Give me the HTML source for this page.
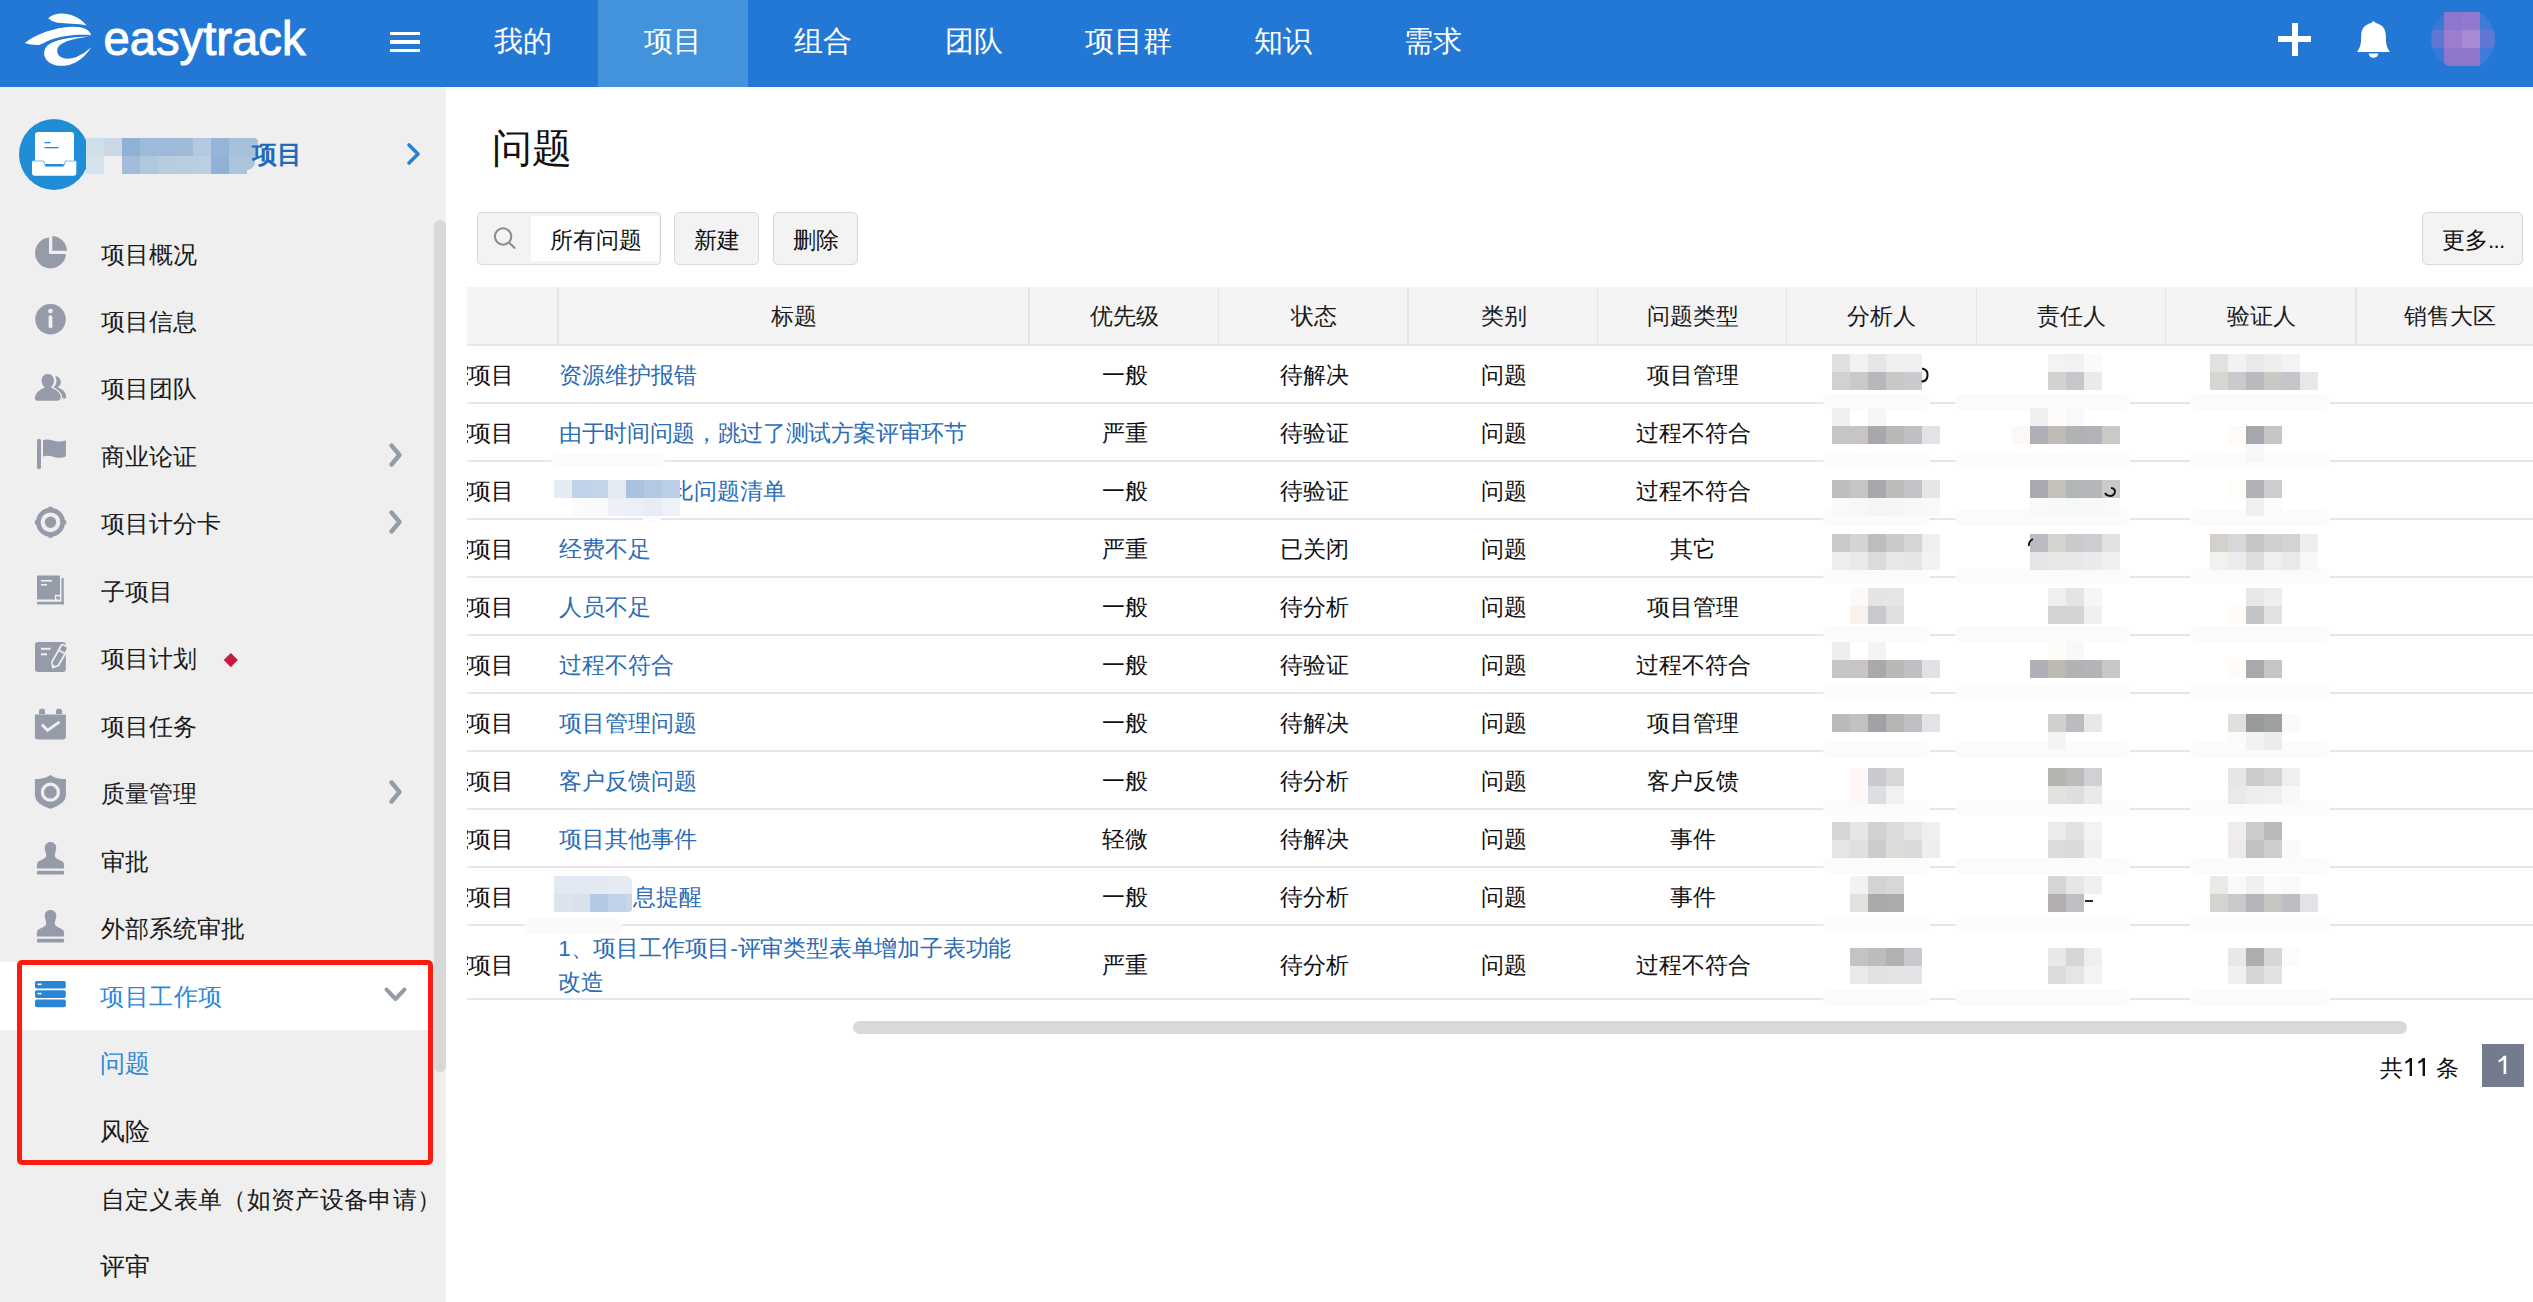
<!DOCTYPE html><html><head><meta charset="utf-8"><style>
html,body{margin:0;padding:0;}
body{width:2533px;height:1302px;overflow:hidden;position:relative;background:#fff;font-family:'Liberation Sans', sans-serif;}
.t{position:absolute;white-space:nowrap;}
.r{position:absolute;}
svg{position:absolute;}

</style></head><body>
<div class="r" style="left:0.0px;top:0.0px;width:2533.0px;height:87.0px;background:#2478d5;"></div>
<div class="r" style="left:598.0px;top:0.0px;width:150.0px;height:87.0px;background:#4393dc;"></div>
<svg style="left:0px;top:0px" width="100" height="87" viewBox="0 0 100 87">
<path fill="#fff" d="M48.2 18.2 C55 12 73 10 86.6 25.4 C78 23.5 66 23.8 58 22.8 C53 22 50.5 20 48.2 18.2 Z"/>
<path fill="#fff" d="M24.7 43 C36 34 54 27.5 72 26.7 C82 26.3 89.5 29 91.2 35.2 C80 34 62 35.5 50 40 C44 42.5 41 45 37.8 45 C33 45 28 44 24.7 43 Z"/>
<path fill="#fff" d="M90 36.5 C70 36.5 54 40 47.5 45.5 C42 50.5 43 60 52 64 C60 67.5 72 66 80 59.5 C86 55 89.5 50 91.2 46.9 C86 52 78 57.5 70 58.6 C62 59.5 56.5 55.5 57.3 50 C58 44 66 39.5 90 36.5 Z"/>
</svg>
<svg style="left:100px;top:12px" width="215" height="60"><text x="3.5" y="42.8" font-family="Liberation Sans, sans-serif" font-weight="normal" font-size="48" fill="#fff" stroke="#fff" stroke-width="1.0" textLength="202" lengthAdjust="spacingAndGlyphs">easytrack</text></svg>
<div class="r" style="left:390.0px;top:32.0px;width:30.0px;height:3.4px;background:#fff;"></div>
<div class="r" style="left:390.0px;top:40.3px;width:30.0px;height:3.4px;background:#fff;"></div>
<div class="r" style="left:390.0px;top:48.5px;width:30.0px;height:3.4px;background:#fff;"></div>
<div class="t" style="left:493.7px;top:26.8px;font-size:28.6px;line-height:28.6px;color:#fff;font-weight:normal;">我的</div>
<div class="t" style="left:643.5px;top:26.8px;font-size:28.6px;line-height:28.6px;color:#fff;font-weight:normal;">项目</div>
<div class="t" style="left:794.0px;top:26.8px;font-size:28.6px;line-height:28.6px;color:#fff;font-weight:normal;">组合</div>
<div class="t" style="left:945.0px;top:26.8px;font-size:28.6px;line-height:28.6px;color:#fff;font-weight:normal;">团队</div>
<div class="t" style="left:1084.7px;top:26.8px;font-size:28.6px;line-height:28.6px;color:#fff;font-weight:normal;">项目群</div>
<div class="t" style="left:1253.8px;top:26.8px;font-size:28.6px;line-height:28.6px;color:#fff;font-weight:normal;">知识</div>
<div class="t" style="left:1404.0px;top:26.8px;font-size:28.6px;line-height:28.6px;color:#fff;font-weight:normal;">需求</div>
<div class="r" style="left:2278.3px;top:36.1px;width:32.8px;height:5.9px;background:#fff;"></div>
<div class="r" style="left:2291.8px;top:23.0px;width:6.2px;height:32.8px;background:#fff;"></div>
<svg style="left:2355px;top:19px" width="38" height="42" viewBox="2355 19 38 42">
<path fill="#fff" d="M2373.5 21.3 C2374.6 21.3 2375.2 22 2375.4 23 C2381.5 24.2 2385.6 28 2385.8 35 L2386 41 C2386.2 45 2387.5 48.5 2389.8 51.9 L2357.2 51.9 C2359.5 48.5 2360.8 45 2361 41 L2361.2 35 C2361.4 28 2365.5 24.2 2371.6 23 C2371.8 22 2372.4 21.3 2373.5 21.3 Z"/>
<path fill="#fff" d="M2368.6 53.4 L2378.4 53.4 C2378 56 2376 57.8 2373.5 57.8 C2371 57.8 2369 56 2368.6 53.4 Z"/>
</svg>
<div class="r" style="left:2430.7px;top:8px;width:64px;height:62px;border-radius:50%;overflow:hidden;">
<div class="r" style="left:0px;top:0px;width:13.3px;height:22.2px;background:#3a78d8"></div>
<div class="r" style="left:49.3px;top:0px;width:14.700000000000003px;height:22.2px;background:#3f7bd8"></div>
<div class="r" style="left:0px;top:22.2px;width:13.3px;height:17.8px;background:#5f76d4"></div>
<div class="r" style="left:49.3px;top:22.2px;width:14.700000000000003px;height:17.8px;background:#6078d5"></div>
<div class="r" style="left:0px;top:40px;width:13.3px;height:22.200000000000003px;background:#3a78d8"></div>
<div class="r" style="left:49.3px;top:40px;width:14.700000000000003px;height:22.200000000000003px;background:#3f7bd8"></div>
</div>
<div class="r" style="left:2444.0px;top:11.9px;width:17.8px;height:18.3px;background:#8b76d0;"></div>
<div class="r" style="left:2461.8px;top:11.9px;width:18.2px;height:18.3px;background:#9179cf;"></div>
<div class="r" style="left:2444.0px;top:30.2px;width:17.8px;height:17.8px;background:#9b7ccd;"></div>
<div class="r" style="left:2461.8px;top:30.2px;width:18.2px;height:17.8px;background:#a98ad5;"></div>
<div class="r" style="left:2444.0px;top:48.0px;width:17.8px;height:18.2px;background:#8e76cd;border-bottom-left-radius:5px;"></div>
<div class="r" style="left:2461.8px;top:48.0px;width:18.2px;height:18.2px;background:#9075cb;"></div>
<div class="r" style="left:0.0px;top:87.0px;width:446.0px;height:1215.0px;background:#efefef;"></div>
<div class="r" style="left:433.5px;top:219.5px;width:12.5px;height:852.0px;background:#d8d8d8;border-radius:6px;"></div>
<div class="r" style="left:18.9px;top:118.7px;width:70px;height:71px;border-radius:50%;background:#208dd6"></div>
<svg style="left:30px;top:128px" width="50" height="52" viewBox="30 128 50 52">
<rect x="35" y="132" width="39" height="32" rx="3" fill="#fff"/>
<rect x="44.5" y="142" width="6" height="1.3" fill="#208dd6"/>
<rect x="44.5" y="147" width="14" height="1.3" fill="#208dd6"/>
<path d="M32 161 L43.5 161 L45.5 166.5 L63.5 166.5 L65.5 161 L76.3 161 L76.3 173 Q76.3 175.8 73.5 175.8 L34.8 175.8 Q32 175.8 32 173 Z" fill="#fff"/>
<path d="M33 161 L43.5 161 L45.5 166.5 L63.5 166.5 L65.5 161 L76 161" fill="none" stroke="#82bde8" stroke-width="1.2"/>
</svg>
<div class="r" style="left:86.4px;top:138.1px;width:17.8px;height:17.8px;background:#cfe0ea;"></div>
<div class="r" style="left:104.2px;top:138.1px;width:17.8px;height:17.8px;background:#c9d8e4;"></div>
<div class="r" style="left:122.0px;top:138.1px;width:17.8px;height:17.8px;background:#8fb1d6;"></div>
<div class="r" style="left:139.8px;top:138.1px;width:17.8px;height:17.8px;background:#9dbad8;"></div>
<div class="r" style="left:157.6px;top:138.1px;width:17.8px;height:17.8px;background:#9dbad8;"></div>
<div class="r" style="left:175.4px;top:138.1px;width:17.8px;height:17.8px;background:#9fbbd8;"></div>
<div class="r" style="left:193.2px;top:138.1px;width:17.8px;height:17.8px;background:#b4c9df;"></div>
<div class="r" style="left:211.0px;top:138.1px;width:17.8px;height:17.8px;background:#95b4d6;"></div>
<div class="r" style="left:228.8px;top:138.1px;width:17.8px;height:17.8px;background:#a7c1db;"></div>
<div class="r" style="left:86.4px;top:155.9px;width:17.8px;height:17.8px;background:#d3e2ec;"></div>
<div class="r" style="left:104.2px;top:155.9px;width:17.8px;height:17.8px;background:#efefef;"></div>
<div class="r" style="left:122.0px;top:155.9px;width:17.8px;height:17.8px;background:#a0bcda;"></div>
<div class="r" style="left:139.8px;top:155.9px;width:17.8px;height:17.8px;background:#b0c8df;"></div>
<div class="r" style="left:157.6px;top:155.9px;width:17.8px;height:17.8px;background:#b8ccdf;"></div>
<div class="r" style="left:175.4px;top:155.9px;width:17.8px;height:17.8px;background:#b8cde0;"></div>
<div class="r" style="left:193.2px;top:155.9px;width:17.8px;height:17.8px;background:#bccfe1;"></div>
<div class="r" style="left:211.0px;top:155.9px;width:17.8px;height:17.8px;background:#90b1d6;"></div>
<div class="r" style="left:228.8px;top:155.9px;width:17.8px;height:17.8px;background:#acc5dd;"></div>
<div class="r" style="left:246.6px;top:138.1px;width:11.4px;height:17.8px;background:#a7c1db;border-top-right-radius:4px;"></div>
<div class="r" style="left:246.6px;top:155.9px;width:8.0px;height:14.0px;background:#acc5dd;border-bottom-right-radius:12px;"></div>
<div class="t" style="left:251.5px;top:143.0px;font-size:24.5px;line-height:24.5px;color:#1f6bb8;font-weight:bold;">项目</div>
<svg style="left:400px;top:138px" width="30" height="32"><path d="M9 7 L18 16 L9 25" fill="none" stroke="#2a7fd0" stroke-width="3.6" stroke-linecap="round" stroke-linejoin="round"/></svg>
<div class="t" style="left:100.5px;top:242.5px;font-size:24.2px;line-height:24.2px;color:#1b1b1b;font-weight:normal;">项目概况</div>
<div class="t" style="left:100.5px;top:309.5px;font-size:24.2px;line-height:24.2px;color:#1b1b1b;font-weight:normal;">项目信息</div>
<div class="t" style="left:100.5px;top:377.0px;font-size:24.2px;line-height:24.2px;color:#1b1b1b;font-weight:normal;">项目团队</div>
<div class="t" style="left:100.5px;top:444.5px;font-size:24.2px;line-height:24.2px;color:#1b1b1b;font-weight:normal;">商业论证</div>
<div class="t" style="left:100.5px;top:512.0px;font-size:24.2px;line-height:24.2px;color:#1b1b1b;font-weight:normal;">项目计分卡</div>
<div class="t" style="left:100.5px;top:579.5px;font-size:24.2px;line-height:24.2px;color:#1b1b1b;font-weight:normal;">子项目</div>
<div class="t" style="left:100.5px;top:647.0px;font-size:24.2px;line-height:24.2px;color:#1b1b1b;font-weight:normal;">项目计划</div>
<div class="t" style="left:100.5px;top:714.5px;font-size:24.2px;line-height:24.2px;color:#1b1b1b;font-weight:normal;">项目任务</div>
<div class="t" style="left:100.5px;top:782.0px;font-size:24.2px;line-height:24.2px;color:#1b1b1b;font-weight:normal;">质量管理</div>
<div class="t" style="left:100.5px;top:849.5px;font-size:24.2px;line-height:24.2px;color:#1b1b1b;font-weight:normal;">审批</div>
<div class="t" style="left:100.5px;top:917.0px;font-size:24.2px;line-height:24.2px;color:#1b1b1b;font-weight:normal;">外部系统审批</div>
<svg style="left:30px;top:230px" width="42" height="42" viewBox="30 230 42 42">
<path fill="#959ba8" d="M49 237.5 A15.5 15.5 0 1 0 66 254 L49 254 Z"/>
<path fill="#959ba8" d="M52.3 236 A15.5 15.5 0 0 1 67 250.8 L52.3 250.8 Z"/>
</svg>
<svg style="left:30px;top:298px" width="42" height="42" viewBox="30 298 42 42">
<circle cx="50.5" cy="319.2" r="15.3" fill="#959ba8"/>
<circle cx="50.5" cy="311" r="2.3" fill="#efefef"/>
<rect x="48.6" y="315.2" width="3.8" height="13" rx="1.9" fill="#efefef"/>
</svg>
<svg style="left:30px;top:368px" width="42" height="38" viewBox="30 368 42 38">
<path fill="#959ba8" d="M55 376 C58.5 376.2 60.8 379 60.8 382 C60.8 384.5 59.5 386 57.8 387.3 C61.5 389 65.5 391.5 66.2 396 C66.5 398 65 398.8 63.8 398.6 C62.8 398.4 62.2 397.5 61.8 396 C60.5 392 56 390.5 53.5 388.8 C53 388.3 53.2 387.6 53.8 387 C55.8 385 56.6 383 56.5 380.5 C56.4 378.5 55.8 377 55 376 Z"/>
<path fill="#959ba8" stroke="#efefef" stroke-width="2.4" paint-order="stroke" d="M47.8 374 C52 374 54 377.5 54 380.5 C54 383.5 52.5 385.5 51 387.5 C55 389.5 59 391 60.5 395.5 C61.5 398.5 60 400.7 57 400.7 L37.5 400.7 C35 400.7 34.5 398.5 35.3 396 C36.5 392 40.5 389.5 44.8 387.5 C43 385.5 41.6 383.5 41.6 380.5 C41.6 377.5 43.6 374 47.8 374 Z"/>
</svg>
<svg style="left:30px;top:435px" width="42" height="40" viewBox="30 435 42 40">
<rect x="37" y="438.8" width="4" height="30.4" rx="2" fill="#959ba8"/>
<path fill="#959ba8" d="M43 440 C49 438 54 441.5 59 441.5 C61.5 441.5 63.5 441 65.9 440.5 L65.9 456.5 C63.5 457.5 61.5 457.8 59 457.8 C54 457.8 49 454.5 43 456.5 Z"/>
</svg>
<svg style="left:30px;top:502px" width="42" height="42" viewBox="30 502 42 42">
<circle cx="50.5" cy="522.3" r="12.2" fill="none" stroke="#959ba8" stroke-width="4.6"/>
<circle cx="50.5" cy="522.3" r="5.7" fill="#959ba8"/>
<rect x="48.5" y="506.7" width="4" height="4" fill="#959ba8"/>
<rect x="48.5" y="533.8" width="4" height="4" fill="#959ba8"/>
<rect x="34.9" y="520.3" width="4" height="4" fill="#959ba8"/>
<rect x="62.2" y="520.3" width="4" height="4" fill="#959ba8"/>
</svg>
<svg style="left:30px;top:570px" width="42" height="40" viewBox="30 570 42 40">
<path fill="#959ba8" d="M37 575.5 L60 575.5 L60 595.5 L56 599.5 L37 599.5 Z"/>
<rect x="61.5" y="578" width="2.2" height="26.4" fill="#959ba8"/>
<rect x="37" y="601.8" width="26.7" height="2.6" fill="#959ba8"/>
<rect x="41" y="580" width="11" height="1.6" fill="#efefef"/>
<rect x="41" y="584" width="6" height="1.6" fill="#efefef"/>
<path fill="#959ba8" d="M57.2 597 L60 597 L60 599.5 L57.2 599.5 Z"/>
<path fill="none" stroke="#efefef" stroke-width="1.3" d="M55.5 600.5 L55.5 595.5 L60.5 595.5"/>
</svg>
<svg style="left:30px;top:638px" width="42" height="40" viewBox="30 638 42 40">
<rect x="35" y="642" width="30.8" height="30" rx="3" fill="#959ba8"/>
<rect x="41" y="647.8" width="9.5" height="2" fill="#efefef"/>
<rect x="41" y="653.3" width="6" height="2" fill="#efefef"/>
<g transform="translate(52.3 668.8) rotate(-60.6)">
<path d="M0 0 L5.5 -4.6 L24.5 -4.6 Q27.3 -4.6 27.3 -1.8 L27.3 1.8 Q27.3 4.6 24.5 4.6 L5.5 4.6 Z" fill="#efefef"/>
<path d="M5.8 -2.8 L18.6 -2.8 L18.6 2.8 L5.8 2.8 Q3.8 1.5 3.8 0 Q3.8 -1.5 5.8 -2.8 Z" fill="#959ba8"/>
<path d="M20.4 -2.8 L24.2 -2.8 Q25.5 -2.8 25.5 -1.5 L25.5 1.5 Q25.5 2.8 24.2 2.8 L20.4 2.8 Z" fill="#959ba8"/>
</g>
</svg>
<svg style="left:30px;top:705px" width="42" height="40" viewBox="30 705 42 40">
<path d="M39 714 L39 711 Q39 708.8 41.2 708.8 L42.8 708.8 Q45 708.8 45 711 L45 714 Z" fill="#959ba8"/>
<path d="M56 714 L56 711 Q56 708.8 58.2 708.8 L59.8 708.8 Q62 708.8 62 711 L62 714 Z" fill="#959ba8"/>
<path fill="#959ba8" d="M34.9 714.5 L65.9 714.5 L65.9 736.5 Q65.9 739.5 62.9 739.5 L37.9 739.5 Q34.9 739.5 34.9 736.5 Z"/>
<path fill="none" stroke="#efefef" stroke-width="2.8" d="M41.8 724.5 L47.5 730.3 L59.5 721.8"/>
</svg>
<svg style="left:30px;top:770px" width="42" height="42" viewBox="30 770 42 42">
<path fill="#959ba8" d="M50.4 774.9 C53.5 777 57 779 65.9 779 L65.9 795 C65.9 802 58.5 806 50.4 808.8 C42.3 806 34.9 802 34.9 795 L34.9 779 C43.8 779 47.3 777 50.4 774.9 Z"/>
<circle cx="50.4" cy="792.2" r="8" fill="none" stroke="#efefef" stroke-width="3.3"/>
</svg>
<svg style="left:30px;top:837.6px" width="42" height="40" viewBox="30 837.6 42 40">
<path fill="#959ba8" d="M50.5 841.6 C54 841.6 56.3 844.1 56.3 847.6 C56.3 850.6 54.5 852.6 54.8 855.6 C55.5 858.6 61 859.6 63 861.6 C64.2 862.9 64.1 864.6 64.1 868.1 L36.9 868.1 C36.9 864.6 36.8 862.9 38 861.6 C40 859.6 45.5 858.6 46.2 855.6 C46.5 852.6 44.7 850.6 44.7 847.6 C44.7 844.1 47 841.6 50.5 841.6 Z"/>
<rect x="37" y="870.4" width="27" height="3.8" rx="1.2" fill="#959ba8"/>
</svg>
<svg style="left:30px;top:905.5px" width="42" height="40" viewBox="30 905.5 42 40">
<path fill="#959ba8" d="M50.5 909.5 C54 909.5 56.3 912.0 56.3 915.5 C56.3 918.5 54.5 920.5 54.8 923.5 C55.5 926.5 61 927.5 63 929.5 C64.2 930.8 64.1 932.5 64.1 936.0 L36.9 936.0 C36.9 932.5 36.8 930.8 38 929.5 C40 927.5 45.5 926.5 46.2 923.5 C46.5 920.5 44.7 918.5 44.7 915.5 C44.7 912.0 47 909.5 50.5 909.5 Z"/>
<rect x="37" y="938.3" width="27" height="3.8" rx="1.2" fill="#959ba8"/>
</svg>
<svg style="left:380px;top:439px" width="30" height="32"><path d="M11.5 6.5 L19.5 16 L11.5 25.5" fill="none" stroke="#959ba8" stroke-width="4.4" stroke-linecap="round" stroke-linejoin="round"/></svg>
<svg style="left:380px;top:506.20000000000005px" width="30" height="32"><path d="M11.5 6.5 L19.5 16 L11.5 25.5" fill="none" stroke="#959ba8" stroke-width="4.4" stroke-linecap="round" stroke-linejoin="round"/></svg>
<svg style="left:380px;top:775.6px" width="30" height="32"><path d="M11.5 6.5 L19.5 16 L11.5 25.5" fill="none" stroke="#959ba8" stroke-width="4.4" stroke-linecap="round" stroke-linejoin="round"/></svg>
<div class="r" style="left:226.4px;top:655.1px;width:9.6px;height:9.6px;background:#c8193f;transform:rotate(45deg)"></div>
<div class="r" style="left:0.0px;top:962.0px;width:430.0px;height:68.0px;background:#fff;"></div>
<svg style="left:30px;top:975px" width="42" height="40" viewBox="30 975 42 40">
<rect x="35" y="981" width="30.8" height="7.6" rx="1.8" fill="#2a86d4"/>
<rect x="35" y="990.3" width="30.8" height="7.6" rx="1.8" fill="#2a86d4"/>
<rect x="35" y="999.6" width="30.8" height="7.6" rx="1.8" fill="#2a86d4"/>
<rect x="37.5" y="983.5" width="4" height="1.6" fill="#fff"/>
<rect x="37.5" y="992.8" width="4" height="1.6" fill="#fff"/>
</svg>
<div class="t" style="left:100.0px;top:984.7px;font-size:24.3px;line-height:24.3px;color:#2e88d6;font-weight:normal;letter-spacing:0.6px;">项目工作项</div>
<svg style="left:378px;top:980px" width="34" height="28"><path d="M8.5 9.5 L17.5 19 L26.5 9.5" fill="none" stroke="#959ba8" stroke-width="4" stroke-linecap="round" stroke-linejoin="round"/></svg>
<div class="t" style="left:100.4px;top:1052.4px;font-size:24.5px;line-height:24.5px;color:#2e88d6;font-weight:normal;">问题</div>
<div class="t" style="left:100.4px;top:1119.6px;font-size:24.5px;line-height:24.5px;color:#1b1b1b;font-weight:normal;">风险</div>
<div class="t" style="left:100.5px;top:1187.9px;font-size:24.3px;line-height:24.3px;color:#1b1b1b;font-weight:normal;letter-spacing:0.36px;">自定义表单（如资产设备申请）</div>
<div class="t" style="left:100.4px;top:1254.6px;font-size:24.5px;line-height:24.5px;color:#1b1b1b;font-weight:normal;">评审</div>
<div class="r" style="left:17px;top:960px;width:406px;height:195px;border:5px solid #ff1a10;border-radius:5px;"></div>
<div class="t" style="left:491.5px;top:128.5px;font-size:39.5px;line-height:39.5px;color:#111;font-weight:normal;">问题</div>
<div class="r" style="left:477px;top:212.3px;width:181.8px;height:50.5px;border:1.2px solid #d9d9d9;border-radius:4px;background:#f3f3f3"></div>
<div class="r" style="left:530.8px;top:216.0px;width:128.0px;height:45.3px;background:#fff;"></div>
<svg style="left:488px;top:221px" width="34" height="34"><circle cx="15.1" cy="15.5" r="8.2" fill="none" stroke="#8c8c8c" stroke-width="2.1"/><path d="M21.2 21.8 L26.5 26.8" stroke="#8c8c8c" stroke-width="2.2" stroke-linecap="round"/></svg>
<div class="t" style="left:549.5px;top:230.1px;font-size:22.5px;line-height:22.5px;color:#111;font-weight:normal;">所有问题</div>
<div class="r" style="left:674px;top:212.3px;width:83.4px;height:50.6px;border:1.2px solid #d9d9d9;border-radius:5px;background:#f3f3f3"></div>
<div class="t" style="left:694.2px;top:229.9px;font-size:22.5px;line-height:22.5px;color:#111;font-weight:normal;">新建</div>
<div class="r" style="left:773.2px;top:212.3px;width:83.2px;height:50.6px;border:1.2px solid #d9d9d9;border-radius:5px;background:#f3f3f3"></div>
<div class="t" style="left:792.7px;top:229.9px;font-size:22.5px;line-height:22.5px;color:#111;font-weight:normal;">删除</div>
<div class="r" style="left:2422.4px;top:212.3px;width:98.7px;height:50.6px;border:1.2px solid #d9d9d9;border-radius:5px;background:#f3f3f3"></div>
<div class="t" style="left:2442.0px;top:229.9px;font-size:22.5px;line-height:22.5px;color:#111;font-weight:normal;">更多<span style="letter-spacing:-0.8px">...</span></div>
<div class="r" style="left:467.0px;top:287.0px;width:2066.0px;height:57.5px;background:#f4f4f5;"></div>
<div class="r" style="left:467.0px;top:344.0px;width:2066.0px;height:2.0px;background:#e6e4ed;"></div>
<div class="r" style="left:557.3px;top:287.0px;width:1.6px;height:57.0px;background:#e5e3ec;"></div>
<div class="r" style="left:1028.0px;top:287.0px;width:1.6px;height:57.0px;background:#e5e3ec;"></div>
<div class="r" style="left:1217.6px;top:287.0px;width:1.6px;height:57.0px;background:#e5e3ec;"></div>
<div class="r" style="left:1407.0px;top:287.0px;width:1.6px;height:57.0px;background:#e5e3ec;"></div>
<div class="r" style="left:1596.6px;top:287.0px;width:1.6px;height:57.0px;background:#e5e3ec;"></div>
<div class="r" style="left:1785.5px;top:287.0px;width:1.6px;height:57.0px;background:#e5e3ec;"></div>
<div class="r" style="left:1975.8px;top:287.0px;width:1.6px;height:57.0px;background:#e5e3ec;"></div>
<div class="r" style="left:2164.9px;top:287.0px;width:1.6px;height:57.0px;background:#e5e3ec;"></div>
<div class="r" style="left:2355.0px;top:287.0px;width:1.6px;height:57.0px;background:#e5e3ec;"></div>
<div class="t" style="left:643.5px;width:300px;text-align:center;top:305.9px;font-size:22.5px;line-height:22.5px;color:#1b1b1b">标题</div>
<div class="t" style="left:974.8px;width:300px;text-align:center;top:305.9px;font-size:22.5px;line-height:22.5px;color:#1b1b1b">优先级</div>
<div class="t" style="left:1164.3px;width:300px;text-align:center;top:305.9px;font-size:22.5px;line-height:22.5px;color:#1b1b1b">状态</div>
<div class="t" style="left:1353.8px;width:300px;text-align:center;top:305.9px;font-size:22.5px;line-height:22.5px;color:#1b1b1b">类别</div>
<div class="t" style="left:1543.0px;width:300px;text-align:center;top:305.9px;font-size:22.5px;line-height:22.5px;color:#1b1b1b">问题类型</div>
<div class="t" style="left:1731.6px;width:300px;text-align:center;top:305.9px;font-size:22.5px;line-height:22.5px;color:#1b1b1b">分析人</div>
<div class="t" style="left:1921.3px;width:300px;text-align:center;top:305.9px;font-size:22.5px;line-height:22.5px;color:#1b1b1b">责任人</div>
<div class="t" style="left:2111.0px;width:300px;text-align:center;top:305.9px;font-size:22.5px;line-height:22.5px;color:#1b1b1b">验证人</div>
<div class="t" style="left:2300.0px;width:300px;text-align:center;top:305.9px;font-size:22.5px;line-height:22.5px;color:#1b1b1b">销售大区</div>
<div class="r" style="left:467.0px;top:402.0px;width:2066.0px;height:2.0px;background:#e6e4ed;"></div>
<div class="t" style="left:467.6px;top:365.3px;font-size:22.5px;line-height:22.5px;color:#111;font-weight:normal;">项目</div>
<div class="t" style="left:559.0px;top:365.3px;font-size:22.5px;line-height:22.5px;color:#2b6cb5;font-weight:normal;">资源维护报错</div>
<div class="t" style="left:974.8px;width:300px;text-align:center;top:365.3px;font-size:22.5px;line-height:22.5px;color:#111">一般</div>
<div class="t" style="left:1164.3px;width:300px;text-align:center;top:365.3px;font-size:22.5px;line-height:22.5px;color:#111">待解决</div>
<div class="t" style="left:1353.8px;width:300px;text-align:center;top:365.3px;font-size:22.5px;line-height:22.5px;color:#111">问题</div>
<div class="t" style="left:1543.0px;width:300px;text-align:center;top:365.3px;font-size:22.5px;line-height:22.5px;color:#111">项目管理</div>
<div class="r" style="left:467.0px;top:460.0px;width:2066.0px;height:2.0px;background:#e6e4ed;"></div>
<div class="t" style="left:467.6px;top:423.3px;font-size:22.5px;line-height:22.5px;color:#111;font-weight:normal;">项目</div>
<div class="t" style="left:559.0px;top:423.3px;font-size:22.5px;line-height:22.5px;color:#2b6cb5;font-weight:normal;letter-spacing:-0.35px;">由于时间问题，跳过了测试方案评审环节</div>
<div class="t" style="left:974.8px;width:300px;text-align:center;top:423.3px;font-size:22.5px;line-height:22.5px;color:#111">严重</div>
<div class="t" style="left:1164.3px;width:300px;text-align:center;top:423.3px;font-size:22.5px;line-height:22.5px;color:#111">待验证</div>
<div class="t" style="left:1353.8px;width:300px;text-align:center;top:423.3px;font-size:22.5px;line-height:22.5px;color:#111">问题</div>
<div class="t" style="left:1543.0px;width:300px;text-align:center;top:423.3px;font-size:22.5px;line-height:22.5px;color:#111">过程不符合</div>
<div class="r" style="left:467.0px;top:518.0px;width:2066.0px;height:2.0px;background:#e6e4ed;"></div>
<div class="t" style="left:467.6px;top:481.3px;font-size:22.5px;line-height:22.5px;color:#111;font-weight:normal;">项目</div>
<div class="t" style="left:671.0px;top:481.3px;font-size:22.5px;line-height:22.5px;color:#2b6cb5;font-weight:normal;">比问题清单</div>
<div class="t" style="left:974.8px;width:300px;text-align:center;top:481.3px;font-size:22.5px;line-height:22.5px;color:#111">一般</div>
<div class="t" style="left:1164.3px;width:300px;text-align:center;top:481.3px;font-size:22.5px;line-height:22.5px;color:#111">待验证</div>
<div class="t" style="left:1353.8px;width:300px;text-align:center;top:481.3px;font-size:22.5px;line-height:22.5px;color:#111">问题</div>
<div class="t" style="left:1543.0px;width:300px;text-align:center;top:481.3px;font-size:22.5px;line-height:22.5px;color:#111">过程不符合</div>
<div class="r" style="left:467.0px;top:576.0px;width:2066.0px;height:2.0px;background:#e6e4ed;"></div>
<div class="t" style="left:467.6px;top:539.3px;font-size:22.5px;line-height:22.5px;color:#111;font-weight:normal;">项目</div>
<div class="t" style="left:559.0px;top:539.3px;font-size:22.5px;line-height:22.5px;color:#2b6cb5;font-weight:normal;">经费不足</div>
<div class="t" style="left:974.8px;width:300px;text-align:center;top:539.3px;font-size:22.5px;line-height:22.5px;color:#111">严重</div>
<div class="t" style="left:1164.3px;width:300px;text-align:center;top:539.3px;font-size:22.5px;line-height:22.5px;color:#111">已关闭</div>
<div class="t" style="left:1353.8px;width:300px;text-align:center;top:539.3px;font-size:22.5px;line-height:22.5px;color:#111">问题</div>
<div class="t" style="left:1543.0px;width:300px;text-align:center;top:539.3px;font-size:22.5px;line-height:22.5px;color:#111">其它</div>
<div class="r" style="left:467.0px;top:634.0px;width:2066.0px;height:2.0px;background:#e6e4ed;"></div>
<div class="t" style="left:467.6px;top:597.3px;font-size:22.5px;line-height:22.5px;color:#111;font-weight:normal;">项目</div>
<div class="t" style="left:559.0px;top:597.3px;font-size:22.5px;line-height:22.5px;color:#2b6cb5;font-weight:normal;">人员不足</div>
<div class="t" style="left:974.8px;width:300px;text-align:center;top:597.3px;font-size:22.5px;line-height:22.5px;color:#111">一般</div>
<div class="t" style="left:1164.3px;width:300px;text-align:center;top:597.3px;font-size:22.5px;line-height:22.5px;color:#111">待分析</div>
<div class="t" style="left:1353.8px;width:300px;text-align:center;top:597.3px;font-size:22.5px;line-height:22.5px;color:#111">问题</div>
<div class="t" style="left:1543.0px;width:300px;text-align:center;top:597.3px;font-size:22.5px;line-height:22.5px;color:#111">项目管理</div>
<div class="r" style="left:467.0px;top:692.0px;width:2066.0px;height:2.0px;background:#e6e4ed;"></div>
<div class="t" style="left:467.6px;top:655.3px;font-size:22.5px;line-height:22.5px;color:#111;font-weight:normal;">项目</div>
<div class="t" style="left:559.0px;top:655.3px;font-size:22.5px;line-height:22.5px;color:#2b6cb5;font-weight:normal;">过程不符合</div>
<div class="t" style="left:974.8px;width:300px;text-align:center;top:655.3px;font-size:22.5px;line-height:22.5px;color:#111">一般</div>
<div class="t" style="left:1164.3px;width:300px;text-align:center;top:655.3px;font-size:22.5px;line-height:22.5px;color:#111">待验证</div>
<div class="t" style="left:1353.8px;width:300px;text-align:center;top:655.3px;font-size:22.5px;line-height:22.5px;color:#111">问题</div>
<div class="t" style="left:1543.0px;width:300px;text-align:center;top:655.3px;font-size:22.5px;line-height:22.5px;color:#111">过程不符合</div>
<div class="r" style="left:467.0px;top:750.0px;width:2066.0px;height:2.0px;background:#e6e4ed;"></div>
<div class="t" style="left:467.6px;top:713.3px;font-size:22.5px;line-height:22.5px;color:#111;font-weight:normal;">项目</div>
<div class="t" style="left:559.0px;top:713.3px;font-size:22.5px;line-height:22.5px;color:#2b6cb5;font-weight:normal;">项目管理问题</div>
<div class="t" style="left:974.8px;width:300px;text-align:center;top:713.3px;font-size:22.5px;line-height:22.5px;color:#111">一般</div>
<div class="t" style="left:1164.3px;width:300px;text-align:center;top:713.3px;font-size:22.5px;line-height:22.5px;color:#111">待解决</div>
<div class="t" style="left:1353.8px;width:300px;text-align:center;top:713.3px;font-size:22.5px;line-height:22.5px;color:#111">问题</div>
<div class="t" style="left:1543.0px;width:300px;text-align:center;top:713.3px;font-size:22.5px;line-height:22.5px;color:#111">项目管理</div>
<div class="r" style="left:467.0px;top:808.0px;width:2066.0px;height:2.0px;background:#e6e4ed;"></div>
<div class="t" style="left:467.6px;top:771.3px;font-size:22.5px;line-height:22.5px;color:#111;font-weight:normal;">项目</div>
<div class="t" style="left:559.0px;top:771.3px;font-size:22.5px;line-height:22.5px;color:#2b6cb5;font-weight:normal;">客户反馈问题</div>
<div class="t" style="left:974.8px;width:300px;text-align:center;top:771.3px;font-size:22.5px;line-height:22.5px;color:#111">一般</div>
<div class="t" style="left:1164.3px;width:300px;text-align:center;top:771.3px;font-size:22.5px;line-height:22.5px;color:#111">待分析</div>
<div class="t" style="left:1353.8px;width:300px;text-align:center;top:771.3px;font-size:22.5px;line-height:22.5px;color:#111">问题</div>
<div class="t" style="left:1543.0px;width:300px;text-align:center;top:771.3px;font-size:22.5px;line-height:22.5px;color:#111">客户反馈</div>
<div class="r" style="left:467.0px;top:866.0px;width:2066.0px;height:2.0px;background:#e6e4ed;"></div>
<div class="t" style="left:467.6px;top:829.3px;font-size:22.5px;line-height:22.5px;color:#111;font-weight:normal;">项目</div>
<div class="t" style="left:559.0px;top:829.3px;font-size:22.5px;line-height:22.5px;color:#2b6cb5;font-weight:normal;">项目其他事件</div>
<div class="t" style="left:974.8px;width:300px;text-align:center;top:829.3px;font-size:22.5px;line-height:22.5px;color:#111">轻微</div>
<div class="t" style="left:1164.3px;width:300px;text-align:center;top:829.3px;font-size:22.5px;line-height:22.5px;color:#111">待解决</div>
<div class="t" style="left:1353.8px;width:300px;text-align:center;top:829.3px;font-size:22.5px;line-height:22.5px;color:#111">问题</div>
<div class="t" style="left:1543.0px;width:300px;text-align:center;top:829.3px;font-size:22.5px;line-height:22.5px;color:#111">事件</div>
<div class="r" style="left:467.0px;top:924.0px;width:2066.0px;height:2.0px;background:#e6e4ed;"></div>
<div class="t" style="left:467.6px;top:887.3px;font-size:22.5px;line-height:22.5px;color:#111;font-weight:normal;">项目</div>
<div class="t" style="left:632.8px;top:887.3px;font-size:22.5px;line-height:22.5px;color:#2b6cb5;font-weight:normal;">息提醒</div>
<div class="t" style="left:974.8px;width:300px;text-align:center;top:887.3px;font-size:22.5px;line-height:22.5px;color:#111">一般</div>
<div class="t" style="left:1164.3px;width:300px;text-align:center;top:887.3px;font-size:22.5px;line-height:22.5px;color:#111">待分析</div>
<div class="t" style="left:1353.8px;width:300px;text-align:center;top:887.3px;font-size:22.5px;line-height:22.5px;color:#111">问题</div>
<div class="t" style="left:1543.0px;width:300px;text-align:center;top:887.3px;font-size:22.5px;line-height:22.5px;color:#111">事件</div>
<div class="r" style="left:467.0px;top:998.0px;width:2066.0px;height:2.0px;background:#e6e4ed;"></div>
<div class="t" style="left:467.6px;top:955.3px;font-size:22.5px;line-height:22.5px;color:#111;font-weight:normal;">项目</div>
<div class="t" style="left:558.3px;top:937.8px;font-size:22.5px;line-height:22.5px;color:#2b6cb5;font-weight:normal;letter-spacing:-0.2px;">1、项目工作项目-评审类型表单增加子表功能</div>
<div class="t" style="left:558.3px;top:972.2px;font-size:22.5px;line-height:22.5px;color:#2b6cb5;font-weight:normal;">改造</div>
<div class="t" style="left:974.8px;width:300px;text-align:center;top:955.3px;font-size:22.5px;line-height:22.5px;color:#111">严重</div>
<div class="t" style="left:1164.3px;width:300px;text-align:center;top:955.3px;font-size:22.5px;line-height:22.5px;color:#111">待分析</div>
<div class="t" style="left:1353.8px;width:300px;text-align:center;top:955.3px;font-size:22.5px;line-height:22.5px;color:#111">问题</div>
<div class="t" style="left:1543.0px;width:300px;text-align:center;top:955.3px;font-size:22.5px;line-height:22.5px;color:#111">过程不符合</div>
<div class="r" style="left:467.0px;top:365.9px;width:1.3px;height:4.0px;background:#333;"></div>
<div class="r" style="left:467.0px;top:373.4px;width:1.3px;height:2.0px;background:#333;"></div>
<div class="r" style="left:467.0px;top:382.4px;width:1.3px;height:2.5px;background:#333;"></div>
<div class="r" style="left:467.0px;top:423.9px;width:1.3px;height:4.0px;background:#333;"></div>
<div class="r" style="left:467.0px;top:431.4px;width:1.3px;height:2.0px;background:#333;"></div>
<div class="r" style="left:467.0px;top:440.4px;width:1.3px;height:2.5px;background:#333;"></div>
<div class="r" style="left:467.0px;top:481.9px;width:1.3px;height:4.0px;background:#333;"></div>
<div class="r" style="left:467.0px;top:489.4px;width:1.3px;height:2.0px;background:#333;"></div>
<div class="r" style="left:467.0px;top:498.4px;width:1.3px;height:2.5px;background:#333;"></div>
<div class="r" style="left:467.0px;top:539.9px;width:1.3px;height:4.0px;background:#333;"></div>
<div class="r" style="left:467.0px;top:547.4px;width:1.3px;height:2.0px;background:#333;"></div>
<div class="r" style="left:467.0px;top:556.4px;width:1.3px;height:2.5px;background:#333;"></div>
<div class="r" style="left:467.0px;top:597.9px;width:1.3px;height:4.0px;background:#333;"></div>
<div class="r" style="left:467.0px;top:605.4px;width:1.3px;height:2.0px;background:#333;"></div>
<div class="r" style="left:467.0px;top:614.4px;width:1.3px;height:2.5px;background:#333;"></div>
<div class="r" style="left:467.0px;top:655.9px;width:1.3px;height:4.0px;background:#333;"></div>
<div class="r" style="left:467.0px;top:663.4px;width:1.3px;height:2.0px;background:#333;"></div>
<div class="r" style="left:467.0px;top:672.4px;width:1.3px;height:2.5px;background:#333;"></div>
<div class="r" style="left:467.0px;top:713.9px;width:1.3px;height:4.0px;background:#333;"></div>
<div class="r" style="left:467.0px;top:721.4px;width:1.3px;height:2.0px;background:#333;"></div>
<div class="r" style="left:467.0px;top:730.4px;width:1.3px;height:2.5px;background:#333;"></div>
<div class="r" style="left:467.0px;top:771.9px;width:1.3px;height:4.0px;background:#333;"></div>
<div class="r" style="left:467.0px;top:779.4px;width:1.3px;height:2.0px;background:#333;"></div>
<div class="r" style="left:467.0px;top:788.4px;width:1.3px;height:2.5px;background:#333;"></div>
<div class="r" style="left:467.0px;top:829.9px;width:1.3px;height:4.0px;background:#333;"></div>
<div class="r" style="left:467.0px;top:837.4px;width:1.3px;height:2.0px;background:#333;"></div>
<div class="r" style="left:467.0px;top:846.4px;width:1.3px;height:2.5px;background:#333;"></div>
<div class="r" style="left:467.0px;top:887.9px;width:1.3px;height:4.0px;background:#333;"></div>
<div class="r" style="left:467.0px;top:895.4px;width:1.3px;height:2.0px;background:#333;"></div>
<div class="r" style="left:467.0px;top:904.4px;width:1.3px;height:2.5px;background:#333;"></div>
<div class="r" style="left:467.0px;top:955.9px;width:1.3px;height:4.0px;background:#333;"></div>
<div class="r" style="left:467.0px;top:963.4px;width:1.3px;height:2.0px;background:#333;"></div>
<div class="r" style="left:467.0px;top:972.4px;width:1.3px;height:2.5px;background:#333;"></div>
<div class="r" style="left:1823.0px;top:394.0px;width:107.0px;height:16.0px;background:#fbfbfb;border-radius:8px;"></div>
<div class="r" style="left:1823.0px;top:452.0px;width:107.0px;height:16.0px;background:#fbfbfb;border-radius:8px;"></div>
<div class="r" style="left:1823.0px;top:510.0px;width:107.0px;height:16.0px;background:#fbfbfb;border-radius:8px;"></div>
<div class="r" style="left:1823.0px;top:568.0px;width:107.0px;height:16.0px;background:#fbfbfb;border-radius:8px;"></div>
<div class="r" style="left:1823.0px;top:626.0px;width:107.0px;height:16.0px;background:#fbfbfb;border-radius:8px;"></div>
<div class="r" style="left:1823.0px;top:684.0px;width:107.0px;height:16.0px;background:#fbfbfb;border-radius:8px;"></div>
<div class="r" style="left:1823.0px;top:742.0px;width:107.0px;height:16.0px;background:#fbfbfb;border-radius:8px;"></div>
<div class="r" style="left:1823.0px;top:800.0px;width:107.0px;height:16.0px;background:#fbfbfb;border-radius:8px;"></div>
<div class="r" style="left:1823.0px;top:858.0px;width:107.0px;height:16.0px;background:#fbfbfb;border-radius:8px;"></div>
<div class="r" style="left:1823.0px;top:916.0px;width:107.0px;height:16.0px;background:#fbfbfb;border-radius:8px;"></div>
<div class="r" style="left:1823.0px;top:990.0px;width:107.0px;height:16.0px;background:#fbfbfb;border-radius:8px;"></div>
<div class="r" style="left:1955.0px;top:394.0px;width:175.0px;height:16.0px;background:#fbfbfb;border-radius:8px;"></div>
<div class="r" style="left:1955.0px;top:452.0px;width:175.0px;height:16.0px;background:#fbfbfb;border-radius:8px;"></div>
<div class="r" style="left:1955.0px;top:510.0px;width:175.0px;height:16.0px;background:#fbfbfb;border-radius:8px;"></div>
<div class="r" style="left:1955.0px;top:568.0px;width:175.0px;height:16.0px;background:#fbfbfb;border-radius:8px;"></div>
<div class="r" style="left:1955.0px;top:626.0px;width:175.0px;height:16.0px;background:#fbfbfb;border-radius:8px;"></div>
<div class="r" style="left:1955.0px;top:684.0px;width:175.0px;height:16.0px;background:#fbfbfb;border-radius:8px;"></div>
<div class="r" style="left:1955.0px;top:742.0px;width:175.0px;height:16.0px;background:#fbfbfb;border-radius:8px;"></div>
<div class="r" style="left:1955.0px;top:800.0px;width:175.0px;height:16.0px;background:#fbfbfb;border-radius:8px;"></div>
<div class="r" style="left:1955.0px;top:858.0px;width:175.0px;height:16.0px;background:#fbfbfb;border-radius:8px;"></div>
<div class="r" style="left:1955.0px;top:916.0px;width:175.0px;height:16.0px;background:#fbfbfb;border-radius:8px;"></div>
<div class="r" style="left:1955.0px;top:990.0px;width:175.0px;height:16.0px;background:#fbfbfb;border-radius:8px;"></div>
<div class="r" style="left:2190.0px;top:394.0px;width:140.0px;height:16.0px;background:#fbfbfb;border-radius:8px;"></div>
<div class="r" style="left:2190.0px;top:452.0px;width:140.0px;height:16.0px;background:#fbfbfb;border-radius:8px;"></div>
<div class="r" style="left:2190.0px;top:510.0px;width:140.0px;height:16.0px;background:#fbfbfb;border-radius:8px;"></div>
<div class="r" style="left:2190.0px;top:568.0px;width:140.0px;height:16.0px;background:#fbfbfb;border-radius:8px;"></div>
<div class="r" style="left:2190.0px;top:626.0px;width:140.0px;height:16.0px;background:#fbfbfb;border-radius:8px;"></div>
<div class="r" style="left:2190.0px;top:684.0px;width:140.0px;height:16.0px;background:#fbfbfb;border-radius:8px;"></div>
<div class="r" style="left:2190.0px;top:742.0px;width:140.0px;height:16.0px;background:#fbfbfb;border-radius:8px;"></div>
<div class="r" style="left:2190.0px;top:800.0px;width:140.0px;height:16.0px;background:#fbfbfb;border-radius:8px;"></div>
<div class="r" style="left:2190.0px;top:858.0px;width:140.0px;height:16.0px;background:#fbfbfb;border-radius:8px;"></div>
<div class="r" style="left:2190.0px;top:916.0px;width:140.0px;height:16.0px;background:#fbfbfb;border-radius:8px;"></div>
<div class="r" style="left:2190.0px;top:990.0px;width:140.0px;height:16.0px;background:#fbfbfb;border-radius:8px;"></div>
<div class="r" style="left:551.0px;top:454.0px;width:114.0px;height:12.0px;background:#fbfbfb;border-radius:6px;"></div>
<div class="r" style="left:643.0px;top:516.0px;width:18.0px;height:6.0px;background:#fbfbfb;border-radius:3px;"></div>
<div class="r" style="left:525.0px;top:918.0px;width:98.0px;height:16.0px;background:#fafafa;border-radius:8px;"></div>
<div class="r" style="left:626.3px;top:875.8px;width:6.2px;height:18.0px;background:#e5ebf3;border-top-right-radius:6px;"></div>
<div class="r" style="left:626.3px;top:893.8px;width:6.2px;height:18.0px;background:#c8d8ea;border-bottom-right-radius:3px;"></div>
<div class="r" style="left:1832.3px;top:353.8px;width:18.0px;height:18.0px;background:#e0e0e0;"></div>
<div class="r" style="left:1850.3px;top:353.8px;width:18.0px;height:18.0px;background:#f1f3f2;"></div>
<div class="r" style="left:1868.3px;top:353.8px;width:18.0px;height:18.0px;background:#e6e4e5;"></div>
<div class="r" style="left:1886.3px;top:353.8px;width:18.0px;height:18.0px;background:#efefef;"></div>
<div class="r" style="left:1904.3px;top:353.8px;width:18.0px;height:18.0px;background:#f0f0f0;"></div>
<div class="r" style="left:1832.3px;top:371.8px;width:18.0px;height:18.0px;background:#d0d1d1;"></div>
<div class="r" style="left:1850.3px;top:371.8px;width:18.0px;height:18.0px;background:#cbc9c7;"></div>
<div class="r" style="left:1868.3px;top:371.8px;width:18.0px;height:18.0px;background:#b8b7bb;"></div>
<div class="r" style="left:1886.3px;top:371.8px;width:18.0px;height:18.0px;background:#c8c8c4;"></div>
<div class="r" style="left:1904.3px;top:371.8px;width:18.0px;height:18.0px;background:#c9cacd;"></div>
<div class="r" style="left:1832.3px;top:407.8px;width:18.0px;height:18.0px;background:#f0f0f0;"></div>
<div class="r" style="left:1868.3px;top:407.8px;width:18.0px;height:18.0px;background:#f6f6f6;"></div>
<div class="r" style="left:1832.3px;top:425.8px;width:18.0px;height:18.0px;background:#c5c6c6;"></div>
<div class="r" style="left:1850.3px;top:425.8px;width:18.0px;height:18.0px;background:#c8c4c3;"></div>
<div class="r" style="left:1868.3px;top:425.8px;width:18.0px;height:18.0px;background:#a8a7ab;"></div>
<div class="r" style="left:1886.3px;top:425.8px;width:18.0px;height:18.0px;background:#b8b8b5;"></div>
<div class="r" style="left:1904.3px;top:425.8px;width:18.0px;height:18.0px;background:#bfc0c3;"></div>
<div class="r" style="left:1922.3px;top:425.8px;width:18.0px;height:18.0px;background:#e2e3e6;"></div>
<div class="r" style="left:1832.3px;top:479.8px;width:18.0px;height:18.0px;background:#bcbdbd;"></div>
<div class="r" style="left:1850.3px;top:479.8px;width:18.0px;height:18.0px;background:#c7c5c3;"></div>
<div class="r" style="left:1868.3px;top:479.8px;width:18.0px;height:18.0px;background:#a8a8ac;"></div>
<div class="r" style="left:1886.3px;top:479.8px;width:18.0px;height:18.0px;background:#bcbcb9;"></div>
<div class="r" style="left:1904.3px;top:479.8px;width:18.0px;height:18.0px;background:#c2c3c6;"></div>
<div class="r" style="left:1922.3px;top:479.8px;width:18.0px;height:18.0px;background:#e5e7e6;"></div>
<div class="r" style="left:1832.3px;top:497.8px;width:18.0px;height:18.0px;background:#f9f9f9;"></div>
<div class="r" style="left:1850.3px;top:497.8px;width:18.0px;height:18.0px;background:#f7f7f7;"></div>
<div class="r" style="left:1868.3px;top:497.8px;width:18.0px;height:18.0px;background:#f5f5f5;"></div>
<div class="r" style="left:1886.3px;top:497.8px;width:18.0px;height:18.0px;background:#f6f6f6;"></div>
<div class="r" style="left:1904.3px;top:497.8px;width:18.0px;height:18.0px;background:#f8f8f8;"></div>
<div class="r" style="left:1922.3px;top:497.8px;width:18.0px;height:18.0px;background:#f9f9f9;"></div>
<div class="r" style="left:1832.3px;top:533.8px;width:18.0px;height:18.0px;background:#c8c9c9;"></div>
<div class="r" style="left:1850.3px;top:533.8px;width:18.0px;height:18.0px;background:#d5d4d3;"></div>
<div class="r" style="left:1868.3px;top:533.8px;width:18.0px;height:18.0px;background:#bdbcc0;"></div>
<div class="r" style="left:1886.3px;top:533.8px;width:18.0px;height:18.0px;background:#cbcac8;"></div>
<div class="r" style="left:1904.3px;top:533.8px;width:18.0px;height:18.0px;background:#d4d5d5;"></div>
<div class="r" style="left:1922.3px;top:533.8px;width:18.0px;height:18.0px;background:#efefef;"></div>
<div class="r" style="left:1832.3px;top:551.8px;width:18.0px;height:18.0px;background:#eceeed;"></div>
<div class="r" style="left:1850.3px;top:551.8px;width:18.0px;height:18.0px;background:#e9e9e9;"></div>
<div class="r" style="left:1868.3px;top:551.8px;width:18.0px;height:18.0px;background:#dbdbdb;"></div>
<div class="r" style="left:1886.3px;top:551.8px;width:18.0px;height:18.0px;background:#e7e8e7;"></div>
<div class="r" style="left:1904.3px;top:551.8px;width:18.0px;height:18.0px;background:#e5e6e6;"></div>
<div class="r" style="left:1922.3px;top:551.8px;width:18.0px;height:18.0px;background:#f2f2f2;"></div>
<div class="r" style="left:1850.3px;top:587.8px;width:18.0px;height:18.0px;background:#fdf9f7;"></div>
<div class="r" style="left:1868.3px;top:587.8px;width:18.0px;height:18.0px;background:#e3e5e5;"></div>
<div class="r" style="left:1886.3px;top:587.8px;width:18.0px;height:18.0px;background:#e6e6e6;"></div>
<div class="r" style="left:1850.3px;top:605.8px;width:18.0px;height:18.0px;background:#f8f1ed;"></div>
<div class="r" style="left:1868.3px;top:605.8px;width:18.0px;height:18.0px;background:#c7c9cd;"></div>
<div class="r" style="left:1886.3px;top:605.8px;width:18.0px;height:18.0px;background:#e0e0df;"></div>
<div class="r" style="left:1832.3px;top:641.8px;width:18.0px;height:18.0px;background:#eeeeee;"></div>
<div class="r" style="left:1868.3px;top:641.8px;width:18.0px;height:18.0px;background:#f4f4f4;"></div>
<div class="r" style="left:1832.3px;top:659.8px;width:18.0px;height:18.0px;background:#c5c6c6;"></div>
<div class="r" style="left:1850.3px;top:659.8px;width:18.0px;height:18.0px;background:#c7c4c3;"></div>
<div class="r" style="left:1868.3px;top:659.8px;width:18.0px;height:18.0px;background:#a9a9ab;"></div>
<div class="r" style="left:1886.3px;top:659.8px;width:18.0px;height:18.0px;background:#b8b8b5;"></div>
<div class="r" style="left:1904.3px;top:659.8px;width:18.0px;height:18.0px;background:#bfc0c3;"></div>
<div class="r" style="left:1922.3px;top:659.8px;width:18.0px;height:18.0px;background:#e1e2e6;"></div>
<div class="r" style="left:1832.3px;top:713.8px;width:18.0px;height:18.0px;background:#b9baba;"></div>
<div class="r" style="left:1850.3px;top:713.8px;width:18.0px;height:18.0px;background:#c3c1bf;"></div>
<div class="r" style="left:1868.3px;top:713.8px;width:18.0px;height:18.0px;background:#a2a1a6;"></div>
<div class="r" style="left:1886.3px;top:713.8px;width:18.0px;height:18.0px;background:#b5b5b2;"></div>
<div class="r" style="left:1904.3px;top:713.8px;width:18.0px;height:18.0px;background:#bebfc2;"></div>
<div class="r" style="left:1922.3px;top:713.8px;width:18.0px;height:18.0px;background:#e2e3e6;"></div>
<div class="r" style="left:1850.3px;top:767.8px;width:18.0px;height:18.0px;background:#fdf8f5;"></div>
<div class="r" style="left:1868.3px;top:767.8px;width:18.0px;height:18.0px;background:#c9cacd;"></div>
<div class="r" style="left:1886.3px;top:767.8px;width:18.0px;height:18.0px;background:#d7d7d7;"></div>
<div class="r" style="left:1850.3px;top:785.8px;width:18.0px;height:18.0px;background:#fdf8f5;"></div>
<div class="r" style="left:1868.3px;top:785.8px;width:18.0px;height:18.0px;background:#dcdfe2;"></div>
<div class="r" style="left:1886.3px;top:785.8px;width:18.0px;height:18.0px;background:#f1f1ef;"></div>
<div class="r" style="left:1832.3px;top:821.8px;width:18.0px;height:18.0px;background:#d5d7d7;"></div>
<div class="r" style="left:1850.3px;top:821.8px;width:18.0px;height:18.0px;background:#e6e6e6;"></div>
<div class="r" style="left:1868.3px;top:821.8px;width:18.0px;height:18.0px;background:#d2d2d5;"></div>
<div class="r" style="left:1886.3px;top:821.8px;width:18.0px;height:18.0px;background:#dcdcdc;"></div>
<div class="r" style="left:1904.3px;top:821.8px;width:18.0px;height:18.0px;background:#e4e6e5;"></div>
<div class="r" style="left:1922.3px;top:821.8px;width:18.0px;height:18.0px;background:#eef0f0;"></div>
<div class="r" style="left:1832.3px;top:839.8px;width:18.0px;height:18.0px;background:#e4e6e6;"></div>
<div class="r" style="left:1850.3px;top:839.8px;width:18.0px;height:18.0px;background:#e1dfdd;"></div>
<div class="r" style="left:1868.3px;top:839.8px;width:18.0px;height:18.0px;background:#cbcbce;"></div>
<div class="r" style="left:1886.3px;top:839.8px;width:18.0px;height:18.0px;background:#dcdbd8;"></div>
<div class="r" style="left:1904.3px;top:839.8px;width:18.0px;height:18.0px;background:#d9dadc;"></div>
<div class="r" style="left:1922.3px;top:839.8px;width:18.0px;height:18.0px;background:#eceeef;"></div>
<div class="r" style="left:1850.3px;top:875.8px;width:18.0px;height:18.0px;background:#f4f2f0;"></div>
<div class="r" style="left:1868.3px;top:875.8px;width:18.0px;height:18.0px;background:#d3d3d5;"></div>
<div class="r" style="left:1886.3px;top:875.8px;width:18.0px;height:18.0px;background:#d7d7da;"></div>
<div class="r" style="left:1850.3px;top:893.8px;width:18.0px;height:18.0px;background:#e3e1dd;"></div>
<div class="r" style="left:1868.3px;top:893.8px;width:18.0px;height:18.0px;background:#a9a9ac;"></div>
<div class="r" style="left:1886.3px;top:893.8px;width:18.0px;height:18.0px;background:#acaba9;"></div>
<div class="r" style="left:1850.3px;top:947.8px;width:18.0px;height:18.0px;background:#c3c2c4;"></div>
<div class="r" style="left:1868.3px;top:947.8px;width:18.0px;height:18.0px;background:#bdbcbd;"></div>
<div class="r" style="left:1886.3px;top:947.8px;width:18.0px;height:18.0px;background:#b3b1b0;"></div>
<div class="r" style="left:1904.3px;top:947.8px;width:18.0px;height:18.0px;background:#c8c9cc;"></div>
<div class="r" style="left:1850.3px;top:965.8px;width:18.0px;height:18.0px;background:#e9e9e9;"></div>
<div class="r" style="left:1868.3px;top:965.8px;width:18.0px;height:18.0px;background:#e2e1df;"></div>
<div class="r" style="left:1886.3px;top:965.8px;width:18.0px;height:18.0px;background:#e4e3e3;"></div>
<div class="r" style="left:1904.3px;top:965.8px;width:18.0px;height:18.0px;background:#e3e4e6;"></div>
<div class="r" style="left:2048.3px;top:353.8px;width:18.0px;height:18.0px;background:#f3f3f3;"></div>
<div class="r" style="left:2066.3px;top:353.8px;width:18.0px;height:18.0px;background:#f1f1f1;"></div>
<div class="r" style="left:2084.3px;top:353.8px;width:18.0px;height:18.0px;background:#fafafa;"></div>
<div class="r" style="left:2048.3px;top:371.8px;width:18.0px;height:18.0px;background:#d3d2cf;"></div>
<div class="r" style="left:2066.3px;top:371.8px;width:18.0px;height:18.0px;background:#c6c7cb;"></div>
<div class="r" style="left:2084.3px;top:371.8px;width:18.0px;height:18.0px;background:#e9ebea;"></div>
<div class="r" style="left:2030.3px;top:407.8px;width:18.0px;height:18.0px;background:#f0f0f0;"></div>
<div class="r" style="left:2048.3px;top:407.8px;width:18.0px;height:18.0px;background:#fefcf9;"></div>
<div class="r" style="left:2066.3px;top:407.8px;width:18.0px;height:18.0px;background:#f8f9fb;"></div>
<div class="r" style="left:2012.3px;top:425.8px;width:18.0px;height:18.0px;background:#fdf8f4;"></div>
<div class="r" style="left:2030.3px;top:425.8px;width:18.0px;height:18.0px;background:#b0afb8;"></div>
<div class="r" style="left:2048.3px;top:425.8px;width:18.0px;height:18.0px;background:#bfbbb5;"></div>
<div class="r" style="left:2066.3px;top:425.8px;width:18.0px;height:18.0px;background:#b0b3b3;"></div>
<div class="r" style="left:2084.3px;top:425.8px;width:18.0px;height:18.0px;background:#b2b3b8;"></div>
<div class="r" style="left:2102.3px;top:425.8px;width:18.0px;height:18.0px;background:#c9c9c7;"></div>
<div class="r" style="left:2030.3px;top:479.8px;width:18.0px;height:18.0px;background:#a9a8b2;"></div>
<div class="r" style="left:2048.3px;top:479.8px;width:18.0px;height:18.0px;background:#c4c0ba;"></div>
<div class="r" style="left:2066.3px;top:479.8px;width:18.0px;height:18.0px;background:#b3b6b6;"></div>
<div class="r" style="left:2084.3px;top:479.8px;width:18.0px;height:18.0px;background:#b5b6ba;"></div>
<div class="r" style="left:2102.3px;top:479.8px;width:18.0px;height:18.0px;background:#cacaca;"></div>
<div class="r" style="left:2030.3px;top:497.8px;width:18.0px;height:18.0px;background:#f8f9f9;"></div>
<div class="r" style="left:2048.3px;top:497.8px;width:18.0px;height:18.0px;background:#f7f8f8;"></div>
<div class="r" style="left:2066.3px;top:497.8px;width:18.0px;height:18.0px;background:#f6f8f7;"></div>
<div class="r" style="left:2084.3px;top:497.8px;width:18.0px;height:18.0px;background:#f7f8f8;"></div>
<div class="r" style="left:2102.3px;top:497.8px;width:18.0px;height:18.0px;background:#f9f9f9;"></div>
<div class="r" style="left:2030.3px;top:533.8px;width:18.0px;height:18.0px;background:#bbbbc2;"></div>
<div class="r" style="left:2048.3px;top:533.8px;width:18.0px;height:18.0px;background:#d6d4d0;"></div>
<div class="r" style="left:2066.3px;top:533.8px;width:18.0px;height:18.0px;background:#c8cbcb;"></div>
<div class="r" style="left:2084.3px;top:533.8px;width:18.0px;height:18.0px;background:#cccdd0;"></div>
<div class="r" style="left:2102.3px;top:533.8px;width:18.0px;height:18.0px;background:#e1e1e1;"></div>
<div class="r" style="left:2030.3px;top:551.8px;width:18.0px;height:18.0px;background:#e4e5e7;"></div>
<div class="r" style="left:2048.3px;top:551.8px;width:18.0px;height:18.0px;background:#e8e7e5;"></div>
<div class="r" style="left:2066.3px;top:551.8px;width:18.0px;height:18.0px;background:#e7e8e7;"></div>
<div class="r" style="left:2084.3px;top:551.8px;width:18.0px;height:18.0px;background:#e9eaeb;"></div>
<div class="r" style="left:2102.3px;top:551.8px;width:18.0px;height:18.0px;background:#f0f0ee;"></div>
<div class="r" style="left:2048.3px;top:587.8px;width:18.0px;height:18.0px;background:#efefed;"></div>
<div class="r" style="left:2066.3px;top:587.8px;width:18.0px;height:18.0px;background:#e4e4e4;"></div>
<div class="r" style="left:2084.3px;top:587.8px;width:18.0px;height:18.0px;background:#f6f6f6;"></div>
<div class="r" style="left:2048.3px;top:605.8px;width:18.0px;height:18.0px;background:#d4d3d1;"></div>
<div class="r" style="left:2066.3px;top:605.8px;width:18.0px;height:18.0px;background:#d3d4d6;"></div>
<div class="r" style="left:2084.3px;top:605.8px;width:18.0px;height:18.0px;background:#eff0ef;"></div>
<div class="r" style="left:2048.3px;top:641.8px;width:18.0px;height:18.0px;background:#fefcf9;"></div>
<div class="r" style="left:2066.3px;top:641.8px;width:18.0px;height:18.0px;background:#f7f8fa;"></div>
<div class="r" style="left:2030.3px;top:659.8px;width:18.0px;height:18.0px;background:#b0afb8;"></div>
<div class="r" style="left:2048.3px;top:659.8px;width:18.0px;height:18.0px;background:#bdbab4;"></div>
<div class="r" style="left:2066.3px;top:659.8px;width:18.0px;height:18.0px;background:#b1b3b3;"></div>
<div class="r" style="left:2084.3px;top:659.8px;width:18.0px;height:18.0px;background:#b3b4b8;"></div>
<div class="r" style="left:2102.3px;top:659.8px;width:18.0px;height:18.0px;background:#c8c8c6;"></div>
<div class="r" style="left:2048.3px;top:713.8px;width:18.0px;height:18.0px;background:#d2d0cd;"></div>
<div class="r" style="left:2066.3px;top:713.8px;width:18.0px;height:18.0px;background:#bbbcc0;"></div>
<div class="r" style="left:2084.3px;top:713.8px;width:18.0px;height:18.0px;background:#e7e8e8;"></div>
<div class="r" style="left:2048.3px;top:731.8px;width:18.0px;height:18.0px;background:#f3f5f4;"></div>
<div class="r" style="left:2048.3px;top:767.8px;width:18.0px;height:18.0px;background:#b6b4b1;"></div>
<div class="r" style="left:2066.3px;top:767.8px;width:18.0px;height:18.0px;background:#bbbbb9;"></div>
<div class="r" style="left:2084.3px;top:767.8px;width:18.0px;height:18.0px;background:#d0d1d5;"></div>
<div class="r" style="left:2048.3px;top:785.8px;width:18.0px;height:18.0px;background:#e3e2e0;"></div>
<div class="r" style="left:2066.3px;top:785.8px;width:18.0px;height:18.0px;background:#dddee0;"></div>
<div class="r" style="left:2084.3px;top:785.8px;width:18.0px;height:18.0px;background:#e9e9e9;"></div>
<div class="r" style="left:2048.3px;top:821.8px;width:18.0px;height:18.0px;background:#ebebea;"></div>
<div class="r" style="left:2066.3px;top:821.8px;width:18.0px;height:18.0px;background:#e1e1e1;"></div>
<div class="r" style="left:2084.3px;top:821.8px;width:18.0px;height:18.0px;background:#f2f3f2;"></div>
<div class="r" style="left:2048.3px;top:839.8px;width:18.0px;height:18.0px;background:#dddcda;"></div>
<div class="r" style="left:2066.3px;top:839.8px;width:18.0px;height:18.0px;background:#d9dadd;"></div>
<div class="r" style="left:2084.3px;top:839.8px;width:18.0px;height:18.0px;background:#eff0ef;"></div>
<div class="r" style="left:2048.3px;top:875.8px;width:18.0px;height:18.0px;background:#d7d6d6;"></div>
<div class="r" style="left:2066.3px;top:875.8px;width:18.0px;height:18.0px;background:#e5e6e5;"></div>
<div class="r" style="left:2084.3px;top:875.8px;width:18.0px;height:18.0px;background:#eff0ef;"></div>
<div class="r" style="left:2048.3px;top:893.8px;width:18.0px;height:18.0px;background:#b3afaf;"></div>
<div class="r" style="left:2066.3px;top:893.8px;width:18.0px;height:18.0px;background:#bebfc2;"></div>
<div class="r" style="left:2048.3px;top:947.8px;width:18.0px;height:18.0px;background:#e9e8e6;"></div>
<div class="r" style="left:2066.3px;top:947.8px;width:18.0px;height:18.0px;background:#d6d6d8;"></div>
<div class="r" style="left:2084.3px;top:947.8px;width:18.0px;height:18.0px;background:#efefef;"></div>
<div class="r" style="left:2048.3px;top:965.8px;width:18.0px;height:18.0px;background:#dcdcdc;"></div>
<div class="r" style="left:2066.3px;top:965.8px;width:18.0px;height:18.0px;background:#e4e5e7;"></div>
<div class="r" style="left:2084.3px;top:965.8px;width:18.0px;height:18.0px;background:#f2f3f3;"></div>
<div class="r" style="left:2210.3px;top:353.8px;width:18.0px;height:18.0px;background:#e2e1df;"></div>
<div class="r" style="left:2228.3px;top:353.8px;width:18.0px;height:18.0px;background:#f0f2f4;"></div>
<div class="r" style="left:2246.3px;top:353.8px;width:18.0px;height:18.0px;background:#e9e9e9;"></div>
<div class="r" style="left:2264.3px;top:353.8px;width:18.0px;height:18.0px;background:#eeeeee;"></div>
<div class="r" style="left:2282.3px;top:353.8px;width:18.0px;height:18.0px;background:#f3f3f3;"></div>
<div class="r" style="left:2210.3px;top:371.8px;width:18.0px;height:18.0px;background:#d7d5d0;"></div>
<div class="r" style="left:2228.3px;top:371.8px;width:18.0px;height:18.0px;background:#c8cacb;"></div>
<div class="r" style="left:2246.3px;top:371.8px;width:18.0px;height:18.0px;background:#b9babd;"></div>
<div class="r" style="left:2264.3px;top:371.8px;width:18.0px;height:18.0px;background:#cbc8c3;"></div>
<div class="r" style="left:2282.3px;top:371.8px;width:18.0px;height:18.0px;background:#c5c5cb;"></div>
<div class="r" style="left:2300.3px;top:371.8px;width:18.0px;height:18.0px;background:#e6e8e7;"></div>
<div class="r" style="left:2228.3px;top:425.8px;width:18.0px;height:18.0px;background:#fffaf6;"></div>
<div class="r" style="left:2246.3px;top:425.8px;width:18.0px;height:18.0px;background:#a6a7ac;"></div>
<div class="r" style="left:2264.3px;top:425.8px;width:18.0px;height:18.0px;background:#c6c6c6;"></div>
<div class="r" style="left:2246.3px;top:443.8px;width:18.0px;height:18.0px;background:#f6f7f9;"></div>
<div class="r" style="left:2228.3px;top:479.8px;width:18.0px;height:18.0px;background:#fffdf8;"></div>
<div class="r" style="left:2246.3px;top:479.8px;width:18.0px;height:18.0px;background:#b2b2b6;"></div>
<div class="r" style="left:2264.3px;top:479.8px;width:18.0px;height:18.0px;background:#cdcdcf;"></div>
<div class="r" style="left:2246.3px;top:497.8px;width:18.0px;height:18.0px;background:#eeeff1;"></div>
<div class="r" style="left:2264.3px;top:497.8px;width:18.0px;height:18.0px;background:#fbfbfb;"></div>
<div class="r" style="left:2210.3px;top:533.8px;width:18.0px;height:18.0px;background:#d4d1cd;"></div>
<div class="r" style="left:2228.3px;top:533.8px;width:18.0px;height:18.0px;background:#d7d8dc;"></div>
<div class="r" style="left:2246.3px;top:533.8px;width:18.0px;height:18.0px;background:#c5c7c6;"></div>
<div class="r" style="left:2264.3px;top:533.8px;width:18.0px;height:18.0px;background:#d1cfcd;"></div>
<div class="r" style="left:2282.3px;top:533.8px;width:18.0px;height:18.0px;background:#d2d2d7;"></div>
<div class="r" style="left:2300.3px;top:533.8px;width:18.0px;height:18.0px;background:#eeeeee;"></div>
<div class="r" style="left:2210.3px;top:551.8px;width:18.0px;height:18.0px;background:#f1f1ef;"></div>
<div class="r" style="left:2228.3px;top:551.8px;width:18.0px;height:18.0px;background:#ebecee;"></div>
<div class="r" style="left:2246.3px;top:551.8px;width:18.0px;height:18.0px;background:#dedede;"></div>
<div class="r" style="left:2264.3px;top:551.8px;width:18.0px;height:18.0px;background:#efefed;"></div>
<div class="r" style="left:2282.3px;top:551.8px;width:18.0px;height:18.0px;background:#e9e9ea;"></div>
<div class="r" style="left:2300.3px;top:551.8px;width:18.0px;height:18.0px;background:#f7f7f7;"></div>
<div class="r" style="left:2246.3px;top:587.8px;width:18.0px;height:18.0px;background:#e6e8e8;"></div>
<div class="r" style="left:2264.3px;top:587.8px;width:18.0px;height:18.0px;background:#eeeeee;"></div>
<div class="r" style="left:2228.3px;top:605.8px;width:18.0px;height:18.0px;background:#fffcf8;"></div>
<div class="r" style="left:2246.3px;top:605.8px;width:18.0px;height:18.0px;background:#c3c4c8;"></div>
<div class="r" style="left:2264.3px;top:605.8px;width:18.0px;height:18.0px;background:#e1e2e2;"></div>
<div class="r" style="left:2228.3px;top:659.8px;width:18.0px;height:18.0px;background:#fffbf7;"></div>
<div class="r" style="left:2246.3px;top:659.8px;width:18.0px;height:18.0px;background:#a8a9ad;"></div>
<div class="r" style="left:2264.3px;top:659.8px;width:18.0px;height:18.0px;background:#c5c5c5;"></div>
<div class="r" style="left:2228.3px;top:713.8px;width:18.0px;height:18.0px;background:#e1dfdb;"></div>
<div class="r" style="left:2246.3px;top:713.8px;width:18.0px;height:18.0px;background:#979b9b;"></div>
<div class="r" style="left:2264.3px;top:713.8px;width:18.0px;height:18.0px;background:#9fa0a3;"></div>
<div class="r" style="left:2282.3px;top:713.8px;width:18.0px;height:18.0px;background:#f9fbfa;"></div>
<div class="r" style="left:2228.3px;top:731.8px;width:18.0px;height:18.0px;background:#fbfbf9;"></div>
<div class="r" style="left:2246.3px;top:731.8px;width:18.0px;height:18.0px;background:#f2f2f0;"></div>
<div class="r" style="left:2264.3px;top:731.8px;width:18.0px;height:18.0px;background:#ececec;"></div>
<div class="r" style="left:2228.3px;top:767.8px;width:18.0px;height:18.0px;background:#e6e6e6;"></div>
<div class="r" style="left:2246.3px;top:767.8px;width:18.0px;height:18.0px;background:#cbcbcb;"></div>
<div class="r" style="left:2264.3px;top:767.8px;width:18.0px;height:18.0px;background:#d3d3d3;"></div>
<div class="r" style="left:2282.3px;top:767.8px;width:18.0px;height:18.0px;background:#f0eff0;"></div>
<div class="r" style="left:2228.3px;top:785.8px;width:18.0px;height:18.0px;background:#e9e9ea;"></div>
<div class="r" style="left:2246.3px;top:785.8px;width:18.0px;height:18.0px;background:#eeeeee;"></div>
<div class="r" style="left:2264.3px;top:785.8px;width:18.0px;height:18.0px;background:#efefee;"></div>
<div class="r" style="left:2282.3px;top:785.8px;width:18.0px;height:18.0px;background:#f8f8f8;"></div>
<div class="r" style="left:2228.3px;top:821.8px;width:18.0px;height:18.0px;background:#efeded;"></div>
<div class="r" style="left:2246.3px;top:821.8px;width:18.0px;height:18.0px;background:#cbcbca;"></div>
<div class="r" style="left:2264.3px;top:821.8px;width:18.0px;height:18.0px;background:#b9babd;"></div>
<div class="r" style="left:2228.3px;top:839.8px;width:18.0px;height:18.0px;background:#eeeaea;"></div>
<div class="r" style="left:2246.3px;top:839.8px;width:18.0px;height:18.0px;background:#c0c1c4;"></div>
<div class="r" style="left:2264.3px;top:839.8px;width:18.0px;height:18.0px;background:#cecece;"></div>
<div class="r" style="left:2282.3px;top:839.8px;width:18.0px;height:18.0px;background:#f9faf9;"></div>
<div class="r" style="left:2210.3px;top:875.8px;width:18.0px;height:18.0px;background:#e9e9e7;"></div>
<div class="r" style="left:2228.3px;top:875.8px;width:18.0px;height:18.0px;background:#f8fafa;"></div>
<div class="r" style="left:2246.3px;top:875.8px;width:18.0px;height:18.0px;background:#f0f0f0;"></div>
<div class="r" style="left:2264.3px;top:875.8px;width:18.0px;height:18.0px;background:#fafbfb;"></div>
<div class="r" style="left:2282.3px;top:875.8px;width:18.0px;height:18.0px;background:#f9f9f9;"></div>
<div class="r" style="left:2210.3px;top:893.8px;width:18.0px;height:18.0px;background:#d4d3ce;"></div>
<div class="r" style="left:2228.3px;top:893.8px;width:18.0px;height:18.0px;background:#c8caca;"></div>
<div class="r" style="left:2246.3px;top:893.8px;width:18.0px;height:18.0px;background:#b4b5b8;"></div>
<div class="r" style="left:2264.3px;top:893.8px;width:18.0px;height:18.0px;background:#c7c5c0;"></div>
<div class="r" style="left:2282.3px;top:893.8px;width:18.0px;height:18.0px;background:#bdbdc4;"></div>
<div class="r" style="left:2300.3px;top:893.8px;width:18.0px;height:18.0px;background:#e2e3e6;"></div>
<div class="r" style="left:2228.3px;top:947.8px;width:18.0px;height:18.0px;background:#e9e7e8;"></div>
<div class="r" style="left:2246.3px;top:947.8px;width:18.0px;height:18.0px;background:#adadae;"></div>
<div class="r" style="left:2264.3px;top:947.8px;width:18.0px;height:18.0px;background:#d6d6d6;"></div>
<div class="r" style="left:2282.3px;top:947.8px;width:18.0px;height:18.0px;background:#fafbfd;"></div>
<div class="r" style="left:2228.3px;top:965.8px;width:18.0px;height:18.0px;background:#f0f0f0;"></div>
<div class="r" style="left:2246.3px;top:965.8px;width:18.0px;height:18.0px;background:#d5d5d8;"></div>
<div class="r" style="left:2264.3px;top:965.8px;width:18.0px;height:18.0px;background:#e2e2e1;"></div>
<div class="r" style="left:554.3px;top:479.8px;width:18.0px;height:18.0px;background:#e5ebf3;"></div>
<div class="r" style="left:572.3px;top:479.8px;width:18.0px;height:18.0px;background:#c0d3e8;"></div>
<div class="r" style="left:590.3px;top:479.8px;width:18.0px;height:18.0px;background:#c3d4e8;"></div>
<div class="r" style="left:608.3px;top:479.8px;width:18.0px;height:18.0px;background:#e4eaf2;"></div>
<div class="r" style="left:626.3px;top:479.8px;width:18.0px;height:18.0px;background:#a8c2e0;"></div>
<div class="r" style="left:644.3px;top:479.8px;width:18.0px;height:18.0px;background:#b3c9e3;"></div>
<div class="r" style="left:662.3px;top:479.8px;width:18.0px;height:18.0px;background:#bccfe6;"></div>
<div class="r" style="left:572.3px;top:497.8px;width:18.0px;height:18.0px;background:#fafbfd;"></div>
<div class="r" style="left:590.3px;top:497.8px;width:18.0px;height:18.0px;background:#f8f9fb;"></div>
<div class="r" style="left:608.3px;top:497.8px;width:18.0px;height:18.0px;background:#edf1f7;"></div>
<div class="r" style="left:626.3px;top:497.8px;width:18.0px;height:18.0px;background:#eaf0f7;"></div>
<div class="r" style="left:644.3px;top:497.8px;width:18.0px;height:18.0px;background:#e7edf6;"></div>
<div class="r" style="left:662.3px;top:497.8px;width:18.0px;height:18.0px;background:#eff3f9;"></div>
<div class="r" style="left:554.3px;top:875.8px;width:18.0px;height:18.0px;background:#e3e9f2;"></div>
<div class="r" style="left:572.3px;top:875.8px;width:18.0px;height:18.0px;background:#e2e8f1;"></div>
<div class="r" style="left:590.3px;top:875.8px;width:18.0px;height:18.0px;background:#e3e9f2;"></div>
<div class="r" style="left:608.3px;top:875.8px;width:18.0px;height:18.0px;background:#e5ebf3;"></div>
<div class="r" style="left:554.3px;top:893.8px;width:18.0px;height:18.0px;background:#dbe3ee;"></div>
<div class="r" style="left:572.3px;top:893.8px;width:18.0px;height:18.0px;background:#d9e1ed;"></div>
<div class="r" style="left:590.3px;top:893.8px;width:18.0px;height:18.0px;background:#b3c9e3;"></div>
<div class="r" style="left:608.3px;top:893.8px;width:18.0px;height:18.0px;background:#c0d2e7;"></div>
<svg style="left:1915px;top:364px" width="18" height="24"><path d="M7 4.5 C11.5 5 13 8.5 12.5 12 C12 15.5 9.5 17.5 6.5 17.5" fill="none" stroke="#111" stroke-width="2"/></svg>
<svg style="left:2102px;top:476px" width="20" height="26"><path d="M3 17 C5 20.5 10.5 21 12.5 17.5 C14 14.5 12 12 9 12" fill="none" stroke="#111" stroke-width="2"/></svg>
<svg style="left:2024px;top:536px" width="14" height="20"><path d="M9 3 C6 4.5 4.5 7 5 10" fill="none" stroke="#111" stroke-width="1.8"/></svg>
<svg style="left:2084px;top:896px" width="14" height="10"><path d="M1 5 L9 5" fill="none" stroke="#111" stroke-width="1.8"/></svg>
<div class="r" style="left:853.0px;top:1021.0px;width:1554.0px;height:13.0px;background:#d9d9d9;border-radius:6.5px;"></div>
<div class="t" style="left:2380.0px;top:1057.7px;font-size:22.5px;line-height:22.5px;color:#111;font-weight:normal;">共</div>
<div class="t" style="left:2436.3px;top:1057.7px;font-size:22.5px;line-height:22.5px;color:#111;font-weight:normal;">条</div>
<svg style="left:2405.3px;top:1057px" width="10" height="20"><path d="M4.6 1 L7 1 L7 19 L4.6 19 L4.6 4.2 C3.6 5.2 2.2 6 0.3 6.6 L0.3 4.4 C2.2 3.7 3.8 2.5 4.6 1 Z" fill="#111"/></svg>
<svg style="left:2418.3px;top:1057px" width="10" height="20"><path d="M4.6 1 L7 1 L7 19 L4.6 19 L4.6 4.2 C3.6 5.2 2.2 6 0.3 6.6 L0.3 4.4 C2.2 3.7 3.8 2.5 4.6 1 Z" fill="#111"/></svg>
<div class="r" style="left:2482.0px;top:1044.2px;width:42.0px;height:42.6px;background:#747b8d;"></div>
<svg style="left:2497.5px;top:1055px" width="10" height="20"><path d="M5.6 0.8 L8.2 0.8 L8.2 19 L5.6 19 L5.6 4.4 C4.4 5.6 2.6 6.6 0.6 7.4 L0.6 5 C2.8 4 4.6 2.6 5.6 0.8 Z" fill="#fff"/></svg>
</body></html>
